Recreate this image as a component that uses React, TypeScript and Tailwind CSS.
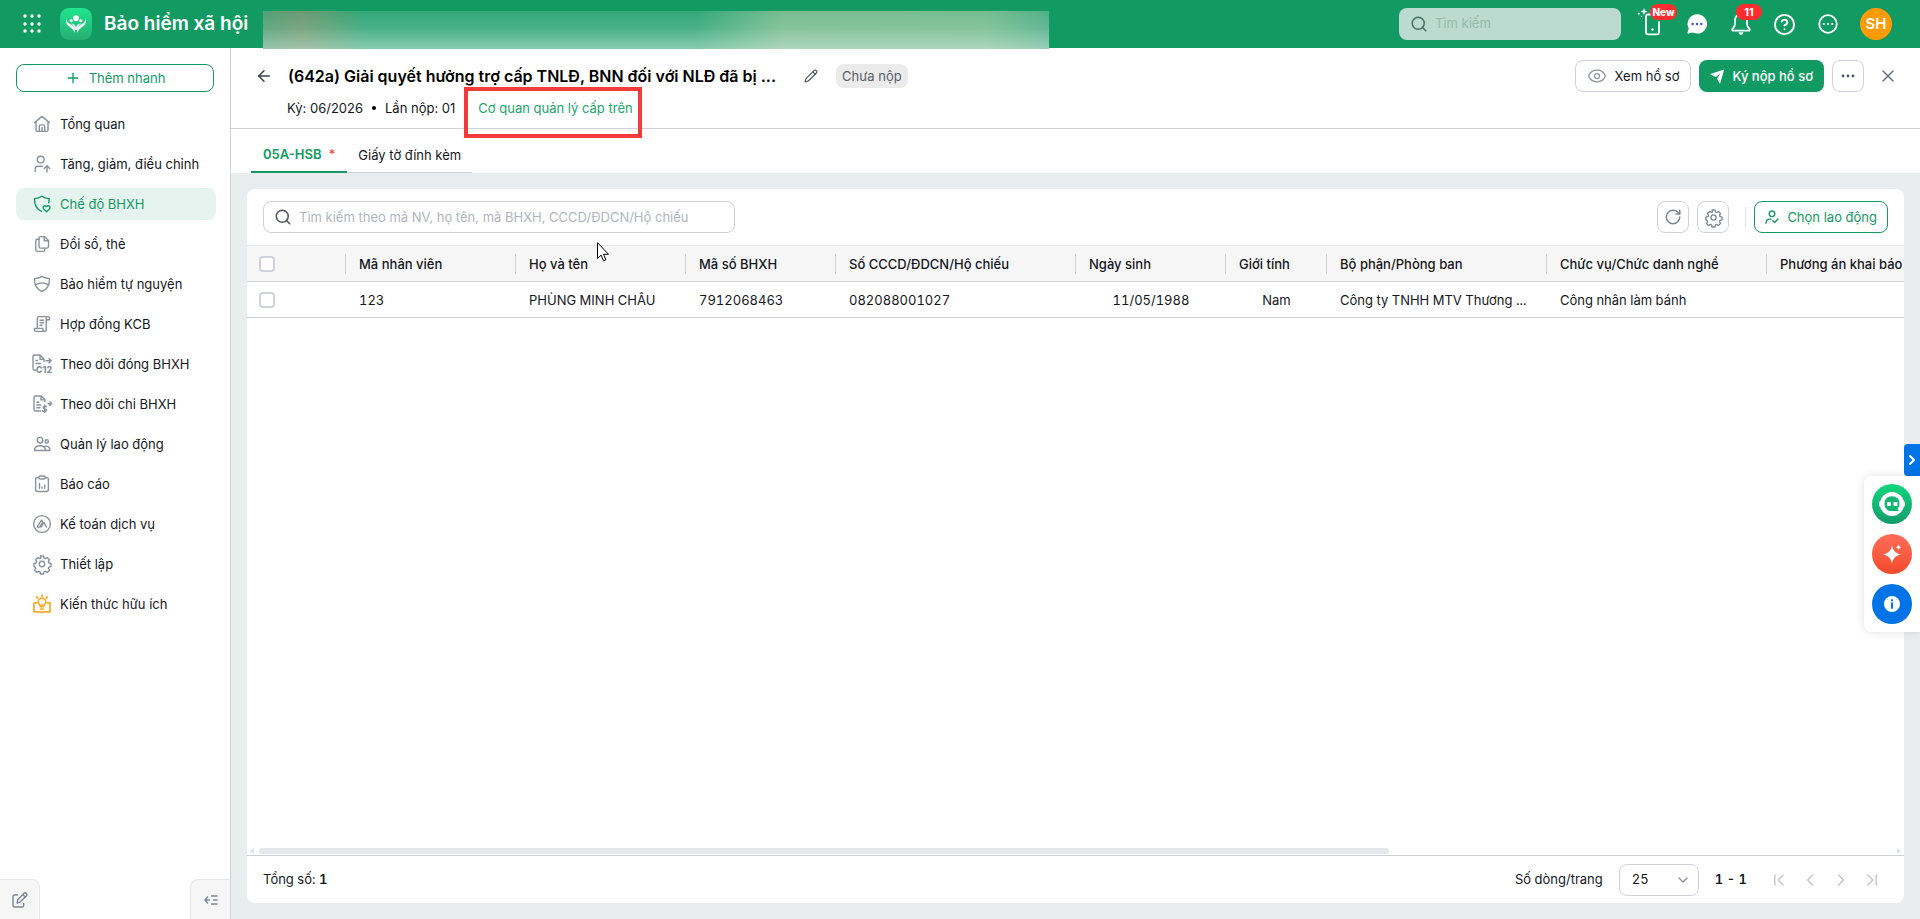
import type { ReactNode } from "react";
import {
  ArrowLeft,
  ChevronDown,
  ChevronFirst,
  ChevronLast,
  ChevronLeft,
  ChevronRight,
  CircleHelp,
  Eye,
  Pencil,
  Plus,
  RotateCw,
  Search,
  X,
} from "lucide-react";

const Icon = ({ children, size = 20, className = "" }: { children: ReactNode; size?: number; className?: string }) => (
  <svg
    width={size}
    height={size}
    viewBox="0 0 20 20"
    fill="none"
    stroke="currentColor"
    strokeWidth="1.4"
    strokeLinecap="round"
    strokeLinejoin="round"
    className={`shrink-0 overflow-visible ${className}`}
    aria-hidden="true"
  >
    {children}
  </svg>
);

const HomeIcon = () => (
  <Icon>
    <path d="M2.6 8.6 10 2.4l7.4 6.2M4 7.8v8.3c0 .8.5 1.3 1.3 1.3h9.4c.8 0 1.3-.5 1.3-1.3V7.8" />
    <path d="M7.3 17.2v-5c0-.8.5-1.3 1.3-1.3h2.8c.8 0 1.3.5 1.3 1.3v5M10 13.5v3.7" />
  </Icon>
);

const UserUpIcon = () => (
  <Icon>
    <circle cx="8.7" cy="5.6" r="3.4" />
    <path d="M3.2 17.4v-2.2c0-1.8 1.2-3 3-3h4.2M15 18v-6M12.3 14.4 15 11.7l2.7 2.7" />
  </Icon>
);

const ShieldHeartIcon = () => (
  <Icon>
    <path d="M9.3 17.2C5 15.6 2.4 11.5 2.5 4.6 5.4 4.7 7.7 3.9 9.800 2.3c2.1 1.6 4.4 2.4 7.300 2.300 0 1.600-.1 2.900-.4 4.200" />
    <path d="m14.600 17.800-2.900-2.900c-1.700-1.900.9-4.400 2.900-2.400 2-2 4.600.5 2.900 2.400z" />
  </Icon>
);

const CopyIcon = () => (
  <Icon>
    <path d="M8.500 2.600h4l4 4v6c0 .9-.6 1.500-1.500 1.500H8.500c-.9 0-1.500-.6-1.500-1.500V4.100c0-.9.6-1.500 1.500-1.500z" />
    <path d="M12.200 2.800v4h4M7 5.300H5.300c-.9 0-1.500.6-1.500 1.500v9c0 .9.600 1.600 1.500 1.600h6c.9 0 1.500-.7 1.500-1.600v-1.700" />
  </Icon>
);

const ShieldIcon = () => (
  <Icon>
    <path d="M2.500 4.600C5.500 4.600 8 3.800 10 2.400c2 1.400 4.500 2.200 7.500 2.200.2 7-2.700 11.200-7.500 12.900C5.200 15.800 2.300 11.600 2.500 4.600z" />
    <path d="M3 10.600c2 .2 3.300-1.700 7-1.700s5 1.900 7 1.700" />
  </Icon>
);

const ScrollIcon = () => (
  <Icon>
    <path d="M5.300 13.800V4.200c0-1 .6-1.600 1.600-1.600h9c1 0 1.600.7 1.600 1.500v1.700h-3.300M14.200 5.800V15.500c0 1.200-.7 1.900-1.700 1.900H4.100c-1 0-1.700-.7-1.700-1.600v-1.400h8.400v1.400c0 1 .7 1.600 1.500 1.600M14.200 5.800V4.200c0-.9.500-1.600 1.300-1.600" />
    <path d="M8 6.200h3.600M8 8.700h3.600M8 11.200h2" />
  </Icon>
);

const DocC12Icon = () => (
  <Icon>
    <path d="M3.500 16.300C2 16.300 1 15.700 1 14.500V2.600C1 1.600 1.600 1 2.500 1H8l4 4v2.500M8 1v4.200h4M4 6.500h1.600M4 9.500h4.500M14 6.800H19M17 4.700l2.200 2.100L17 8.900" />
    <text x="3.800" y="19.300" fontSize="9" fontWeight="800" fontFamily="Inter, sans-serif" fill="currentColor" stroke="none">
      C12
    </text>
  </Icon>
);

const DocMoneyIcon = () => (
  <Icon>
    <path d="M8.600 17H3.500c-.9 0-1.500-.600-1.500-1.500v-12C2 2.600 2.600 2 3.500 2h5.700l3.600 3.600v2.200M9 2.200v3.700h3.600M4.800 8.200h2M4.800 11h4M4.800 13.800h3.200M16 9.700h3.500M17.800 7.800l1.900 1.900-1.900 1.900" />
    <path d="M14.500 12.600c-.4-.7-1.200-.8-1.800-.7-2 .3-2 2.500 0 2.700 2.500.2 2.500 2.700 0 2.900-1 .1-1.800-.2-2.200-.9M12.700 11v7.500" />
  </Icon>
);

const UsersIcon = () => (
  <Icon>
    <circle cx="8" cy="6.200" r="2.800" />
    <circle cx="14.700" cy="7.500" r="1.700" />
    <path d="M2.500 16.500c0-3 1.700-4.800 5.500-4.800s5.500 1.800 5.500 4.800zM12 12.600c3-1.300 6 .2 6 3.900h-4.400" />
  </Icon>
);

const ReportIcon = () => (
  <Icon>
    <rect x="3.600" y="3.500" width="12.800" height="14" rx="2" />
    <rect x="6.800" y="2" width="6.400" height="3" rx="1.500" fill="white" />
    <path d="M7.500 9.500v4.700M10 13v1.200M12.700 11v3.200" />
  </Icon>
);

const AccountingIcon = () => (
  <Icon>
    <circle cx="10" cy="10" r="8.400" />
    <path d="m5.200 13 4.300-7 1.200 2.200-3 4.900H5.200M9.300 13l2.600-4.500 2.600 4.500" />
  </Icon>
);

const GearIcon = ({ size = 20 }: { size?: number }) => (
  <Icon size={size}>
    <circle cx="10" cy="10" r="2.700" />
    <path d="M8.500 2h3l.6 2.200 1.100.5 2-1.100 2.200 2.200-1.100 2 .5 1.100 2.200.6v3l-2.200.6-.5 1.100 1.100 2-2.200 2.200-2-1.100-1.100.5-.6 2.200h-3l-.6-2.200-1.100-.5-2 1.100-2.200-2.200 1.100-2-.5-1.100L1.900 12.500v-3l2.300-.6.5-1.100-1.100-2 2.200-2.200 2 1.100 1.100-.5z" />
  </Icon>
);

const KnowledgeIcon = () => (
  <Icon className="text-[#ffa726]">
    <path
      strokeWidth="1.700"
      d="M4.500 8.800H2v9h5.500c1 0 1.600.2 2.500.8.900-.6 1.500-.8 2.500-.8H18v-9h-2.500M10 .8v1.400M4.600 2.800l1 1M15.400 2.800l-1 1M8.500 12.600c0-1.600-2.300-2.300-2.300-4.600A3.800 3.800 0 0 1 13.800 8c0 2.300-2.300 3-2.300 4.600zM8.700 15h2.600M10 10.500V12"
    />
  </Icon>
);

const menu = [
  { label: "Tổng quan", icon: <HomeIcon /> },
  { label: "Tăng, giảm, điều chỉnh", icon: <UserUpIcon /> },
  { label: "Chế độ BHXH", icon: <ShieldHeartIcon />, active: true },
  { label: "Đổi sổ, thẻ", icon: <CopyIcon /> },
  { label: "Bảo hiểm tự nguyện", icon: <ShieldIcon /> },
  { label: "Hợp đồng KCB", icon: <ScrollIcon /> },
  { label: "Theo dõi đóng BHXH", icon: <DocC12Icon /> },
  { label: "Theo dõi chi BHXH", icon: <DocMoneyIcon /> },
  { label: "Quản lý lao động", icon: <UsersIcon /> },
  { label: "Báo cáo", icon: <ReportIcon /> },
  { label: "Kế toán dịch vụ", icon: <AccountingIcon /> },
  { label: "Thiết lập", icon: <GearIcon /> },
  { label: "Kiến thức hữu ích", icon: <KnowledgeIcon /> },
];

const columns = [
  { label: "Mã nhân viên", value: "123", width: "w-[170px]" },
  { label: "Họ và tên", value: "PHÙNG MINH CHÂU", width: "w-[170px]" },
  { label: "Mã số BHXH", value: "7912068463", width: "w-[150px]" },
  { label: "Số CCCD/ĐDCN/Hộ chiếu", value: "082088001027", width: "w-[240px]" },
  { label: "Ngày sinh", value: "11/05/1988", width: "w-[150px]", center: true },
  { label: "Giới tính", value: "Nam", width: "w-[101px]", center: true },
  { label: "Bộ phận/Phòng ban", value: "Công ty TNHH MTV Thương ...", width: "w-[220px]" },
  { label: "Chức vụ/Chức danh nghề", value: "Công nhân làm bánh", width: "w-[220px]" },
  { label: "Phương án khai báo", value: "", width: "w-[320px]" },
];

const TopBar = () => (
  <header className="relative flex h-12 shrink-0 items-center bg-[#119b62] pl-[22px] pr-7 text-white">
    <button aria-label="Ứng dụng" className="mr-[18px]">
      <svg width="20" height="20" viewBox="0 0 20 20" fill="currentColor">
        {[2, 10, 17].map((y) => [3, 10, 17].map((x) => <circle key={`${x}-${y}`} cx={x} cy={y} r="1.7" />))}
      </svg>
    </button>
    <svg width="32" height="32" viewBox="0 0 32 32" className="mr-3 shrink-0" aria-hidden="true">
      <defs>
        <linearGradient id="logo" x1="0" y1="0" x2="0" y2="1">
          <stop offset="0" stopColor="#1fe58f" />
          <stop offset="1" stopColor="#27ae74" />
        </linearGradient>
      </defs>
      <rect width="32" height="32" rx="9" fill="url(#logo)" />
      <circle cx="16" cy="10.200" r="2.900" fill="#fff" />
      <circle cx="11.200" cy="12.800" r="1.500" fill="#fff" />
      <circle cx="20.800" cy="12.800" r="1.500" fill="#fff" />
      <path fill="#fff" d="M6.300 10.500c.4 4 3 5 5.500 6.600 2.500 1.600 3.700 4 3 7.700-1.400-3.400-3-4.500-5-5.800-2.500-1.700-4.400-4.200-3.500-8.500zM25.700 10.500c-.4 4-3 5-5.500 6.600-2.500 1.600-3.700 4-3 7.700 1.400-3.400 3-4.500 5-5.800 2.500-1.700 4.400-4.200 3.500-8.500z" />
      <path fill="#fff" d="M11.300 15.600c2.500.4 4.200 1.600 4.700 3.900.5-2.300 2.200-3.500 4.700-3.900-2 1.800-3.300 3.500-3.700 6.400h-2c-.4-2.900-1.700-4.600-3.700-6.400z" />
    </svg>
    <span className="text-[19px] font-semibold">Bảo hiểm xã hội</span>

    {/* blurred company name */}
    <div className="absolute left-[263px] top-[11px] z-10 h-[38px] w-[786px] overflow-hidden bg-[#32a878]">
      <div className="absolute inset-0 bg-[linear-gradient(to_right,#4fa077_0%,#6c9a72_5%,#32a878_13%,#32a878_55%,#78bd91_66%,#76bd91_92%,#4fb087_100%)]" />
      <div className="absolute inset-0 bg-[linear-gradient(to_bottom,rgba(255,255,255,0)_0%,rgba(240,246,240,0.120)_45%,rgba(240,246,240,0.450)_100%)]" />
    </div>

    <div className="ml-auto flex items-center">
      <label className="mr-4 flex h-8 w-[222px] items-center gap-[7px] rounded-lg bg-[#bddad0] px-[11px]">
        <Search size={18} strokeWidth={2} className="shrink-0 text-[#44705f]" />
        <input
          aria-label="Tìm kiếm"
          placeholder="Tìm kiếm"
          className="w-full min-w-0 bg-transparent text-[13px] outline-none placeholder:text-[#92bbab]"
        />
      </label>
      <button aria-label="Ứng dụng di động" className="relative mr-6 h-8 w-[26px]">
        <svg width="26" height="32" viewBox="0 0 26 32" fill="none" stroke="currentColor" strokeWidth="1.800">
          <path d="M22 14v10.300c0 1.200-.7 2-2 2h-9c-1.300 0-2-.8-2-2V8.500c0-1.300.7-2 2-2H15" strokeLinecap="round" />
          <circle cx="15.500" cy="21.500" r="1.200" fill="currentColor" stroke="none" />
          <path d="m7 0 1 2.400 2.400 1L8 4.400 7 7 6 4.400l-2.400-1L6 2.400zM1.800 4.200l.5 1.100 1.200.5-1.200.5-.5 1.200-.5-1.200L.1 5.800l1.200-.5zM4.500 7.600l.8.9-.8.8-.8-.8z" fill="currentColor" stroke="none" />
        </svg>
        <span className="absolute -top-1 left-[13px] flex h-4 w-[27px] items-center justify-center rounded-full bg-[#ff2d2d] text-[10px] font-extrabold">
          New
        </span>
      </button>
      <button aria-label="Tin nhắn" className="mr-6">
        <svg width="20" height="20" viewBox="0 0 20 20">
          <path fill="#fff" d="M10.300.3A9.600 9.600 0 1 1 6 18.400L1.400 19.600c-.7.100-1.100-.4-.9-1l1.300-4A9.600 9.600 0 0 1 10.300.3z" />
          <g fill="#3d4fe0">
            <circle cx="5.700" cy="10" r="1.200" />
            <circle cx="10" cy="10" r="1.200" />
            <circle cx="14.300" cy="10" r="1.200" />
          </g>
        </svg>
      </button>
      <button aria-label="Thông báo" className="relative mr-6">
        <svg width="20" height="20" viewBox="0 0 20 20" fill="none" stroke="currentColor" strokeWidth="1.800" className="overflow-visible">
          <path strokeLinejoin="round" d="M10 .5C6.300.500 4 3 4 6.500v3.500c0 2-.8 3-2.300 4.600-.9 1-.4 2.100.9 2.100h14.800c1.300 0 1.800-1.100.9-2.100C16.800 13 16 12 16 10V6.500C16 3 13.700.5 10 .5z" />
          <path d="M7.500 18.200c.4 1.700 1.300 2.600 2.500 2.600s2.100-.9 2.500-2.600z" fill="currentColor" stroke="none" />
        </svg>
        <span className="absolute -top-[10px] left-[5px] flex h-4 w-[26px] items-center justify-center rounded-full bg-[#ff2d2d] text-[11px] font-bold">
          11
        </span>
      </button>
      <button aria-label="Trợ giúp" className="mr-[22px] -ml-0.5">
        <CircleHelp size={23} strokeWidth={2} />
      </button>
      <button aria-label="Thêm" className="mr-[22px]">
        <svg width="20" height="20" viewBox="0 0 20 20" fill="none" stroke="currentColor" strokeWidth="1.800">
          <circle cx="10" cy="10" r="8.800" />
          <path d="M5.700 10h.1M10 10h.1M14.200 10h.1" strokeWidth="2.200" strokeLinecap="round" />
        </svg>
      </button>
      <button className="size-8 rounded-full bg-[#ff9b04] text-[15px] font-semibold">SH</button>
    </div>
  </header>
);

const Sidebar = () => (
  <aside className="flex w-[231px] shrink-0 flex-col border-r border-[#cfd2d8] bg-white">
    <button className="mx-4 mt-4 flex h-7 w-[198px] items-center justify-center gap-2 rounded-lg border border-[#119b62] text-[13px] text-[#119b62]">
      <Plus size={16} strokeWidth={2} />
      <span className="pt-0.5">Thêm nhanh</span>
    </button>
    <nav className="mx-4 mt-4 flex w-[200px] flex-col gap-2 text-[13px]">
      {menu.map((item) => (
        <a
          key={item.label}
          href="#"
          className={`flex h-8 items-center gap-2 rounded-lg pl-4 ${item.active ? "bg-[#e6f4ef] text-[#119b62]" : "text-[#15171c]"}`}
        >
          <span className={item.active ? "" : "text-[#8b919d]"}>{item.icon}</span>
          <span className="pt-0.5">{item.label}</span>
        </a>
      ))}
    </nav>
    <div className="mt-auto flex justify-between">
      <button aria-label="Góp ý" className="flex size-10 items-center justify-center rounded-tr-lg border-r border-t border-[#e5e7ea] bg-[#f6f6f6] text-[#7f8593]">
        <Icon size={18}>
          <path strokeWidth="1.600" d="M7 4.500H4c-1.200 0-1.800.7-1.800 1.800V16c0 1.200.7 1.800 1.800 1.800h8.300c1.200 0 1.800-.7 1.800-1.800v-2.200M6.800 13.300l.7-3.700 7-7c1.800-1.500 4.200 1 2.700 2.700l-7 7zM13 4l3 3" />
        </Icon>
      </button>
      <button aria-label="Thu gọn" className="flex size-10 items-center justify-center rounded-tl-lg border-l border-t border-[#e5e7ea] bg-[#f6f6f6] text-[#7f8593]">
        <svg width="14" height="10" viewBox="0 0 14 10" fill="none" stroke="currentColor" strokeWidth="1.300">
          <path d="M4 1.500.9 5 4 8.500M1 5h5M7 1h6.500M9 5h4.500M7 9h6.500" />
        </svg>
      </button>
    </div>
  </aside>
);

const RecordHeader = () => (
  <section className="flex h-[81px] shrink-0 items-start justify-between border-b border-[#cfd2d8] bg-white pl-6 pr-[22px] pt-3">
    <div>
      <div className="flex h-8 items-center">
        <button aria-label="Quay lại" className="mr-[15px] text-[#3d4048]">
          <ArrowLeft size={18} strokeWidth={2} />
        </button>
        <h1 className="w-[492px] truncate text-[16px] font-semibold text-black">
          (642a) Giải quyết hưởng trợ cấp TNLĐ, BNN đối với NLĐ đã bị ...
        </h1>
        <button aria-label="Sửa" className="ml-6 mr-[18px] text-[#50545e]">
          <Pencil size={14} strokeWidth={2} />
        </button>
        <span className="flex h-6 items-center rounded-lg bg-[#ebebeb] px-1.5 pt-0.5 text-[13px] text-[#5b5e64]">Chưa nộp</span>
      </div>
      <div className="flex items-center pl-[32px] text-[13px] leading-8 text-[#15171c]">
        <span>Kỳ: 06/2026</span>
        <span className="mx-[9px] size-1 rounded-full bg-black" />
        <span>Lần nộp: 01</span>
        <div className="relative ml-[23px]">
          <a href="#" className="text-[#23a46c]">Cơ quan quản lý cấp trên</a>
          <div className="pointer-events-none absolute -left-[14px] -top-[5px] z-10 h-[51px] w-[178px] border-4 border-[#f43b3b]" />
        </div>
      </div>
    </div>
    <div className="flex items-center gap-2 text-[13px] text-[#15171c]">
      <button className="flex h-8 items-center gap-2 rounded-lg border border-[#cfd2d8] px-[11px]">
        <Eye size={20} strokeWidth={1.500} className="text-[#8b919d]" />
        <span className="pt-0.5">Xem hồ sơ</span>
      </button>
      <button className="flex h-8 items-center gap-[7px] rounded-lg bg-[#119b62] px-[11px] font-medium text-white">
        <svg width="15" height="15" viewBox="0 0 15 15" fill="currentColor">
          <path d="M14.200.6 10.300 14c-.2.600-.8.700-1.100.100L7 9.400 10.400 4.600 5.600 8 .9 5.800C.2 5.500.3 4.900 1 4.700z" />
        </svg>
        <span className="pt-0.5">Ký nộp hồ sơ</span>
      </button>
      <button aria-label="Tùy chọn" className="flex size-8 items-center justify-center rounded-lg border border-[#cfd2d8]">
        <svg width="14" height="4" viewBox="0 0 14 4" fill="#50545e">
          <circle cx="2" cy="2" r="1.400" />
          <circle cx="7" cy="2" r="1.400" />
          <circle cx="12" cy="2" r="1.400" />
        </svg>
      </button>
      <button aria-label="Đóng" className="ml-[6px] text-[#666b76]">
        <X size={20} strokeWidth={1.700} />
      </button>
    </div>
  </section>
);

const Tabs = () => (
  <div role="tablist" className="flex h-11 shrink-0 items-stretch bg-white pl-5 text-[13px]">
    <button role="tab" aria-selected="true" className="border-b-2 border-[#119b62] px-3 pt-3.5 pb-1 font-semibold text-[#119b62]">
      05A-HSB <span className="ml-1 font-normal text-[#f43b3b]">*</span>
    </button>
    <button role="tab" aria-selected="false" className="border-b border-[#cfd2d8] px-[11px] pt-3.5 pb-1 text-[#15171c]">
      Giấy tờ đính kèm
    </button>
  </div>
);

const iconBtn = "flex size-8 items-center justify-center rounded-lg border border-[#cfd2d8] text-[#7f8593]";
const checkbox = "block size-4 appearance-none rounded-[4px] border-2 border-[#cfd2d8] bg-white";

const Toolbar = () => (
  <div className="flex h-14 shrink-0 items-center px-4">
    <label className="flex h-8 w-[472px] items-center gap-[7px] rounded-lg border border-[#cfd2d8] px-2.5">
      <Search size={18} strokeWidth={2} className="shrink-0 text-[#50545e]" />
      <input
        aria-label="Tìm kiếm nhân viên"
        placeholder="Tìm kiếm theo mã NV, họ tên, mã BHXH, CCCD/ĐDCN/Hộ chiếu"
        className="w-full min-w-0 pt-0.5 text-[13px] outline-none placeholder:text-[#b1b5bd]"
      />
    </label>
    <div className="ml-auto flex items-center gap-2">
      <button aria-label="Tải lại" className={iconBtn}>
        <RotateCw size={18} strokeWidth={2} />
      </button>
      <button aria-label="Thiết lập cột" className={iconBtn}>
        <GearIcon size={19} />
      </button>
      <span className="ml-2 h-5 w-px bg-[#e0e2e6]" />
      <button className="flex h-8 items-center gap-2 rounded-lg border border-[#119b62] px-[10px] text-[13px] text-[#119b62]">
        <Icon size={14}>
          <circle cx="10" cy="5.500" r="4" strokeWidth="2" />
          <path strokeWidth="2" d="M1.500 19c0-3.500 1.500-6 5-6h2M11 15.500l2.800 2.500 4.700-5" />
        </Icon>
        <span className="pt-0.5">Chọn lao động</span>
      </button>
    </div>
  </div>
);

const EmployeeTable = () => (
  <div className="min-h-0 flex-1 overflow-hidden">
    <table className="w-[1840px] table-fixed border-collapse text-left text-[13px] text-[#15171c] tabular-nums">
      <thead>
        <tr className="h-9 border-y border-[#cfd2d8] border-t-[#e6e7ea] bg-[#f6f6f6]">
          <th className="w-[99px] p-0">
            <div className="flex h-5 items-center border-r border-[#cfd2d8] pl-3">
              <input type="checkbox" aria-label="Chọn tất cả" className={checkbox} />
            </div>
          </th>
          {columns.map((col) => (
            <th key={col.label} className={`p-0 font-medium ${col.width}`}>
              <div className="h-5 border-r border-[#cfd2d8] pl-[13px] leading-5">{col.label}</div>
            </th>
          ))}
        </tr>
      </thead>
      <tbody>
        <tr className="h-9 border-b border-[#cfd2d8]">
          <td className="p-0 pl-3">
            <input type="checkbox" aria-label="Chọn dòng" className={checkbox} />
          </td>
          {columns.map((col) => (
            <td key={col.label} className={`truncate px-[13px] pt-0.5 pb-0 ${col.center ? "text-center" : ""}`}>
              {col.value}
            </td>
          ))}
        </tr>
      </tbody>
    </table>
  </div>
);

const TableFooter = () => (
  <>
    <div className="flex h-2 shrink-0 items-center justify-between px-[3px]">
      <svg width="4" height="6" viewBox="0 0 4 6" fill="#dddfe3"><path d="M4 0v6L0 3z" /></svg>
      <div className="mx-[5px] h-[6px] flex-1">
        <div className="h-[6px] w-[calc(69%+3px)] rounded-full bg-[#e6e7ea]" />
      </div>
      <svg width="4" height="6" viewBox="0 0 4 6" fill="#dddfe3"><path d="M0 0v6l4-3z" /></svg>
    </div>
    <div className="flex h-12 shrink-0 items-center border-t border-[#cfd2d8] px-4 text-[13px] text-[#15171c] tabular-nums">
      <span>Tổng số: <b className="font-semibold">1</b></span>
      <label htmlFor="page-size" className="ml-auto mr-4">Số dòng/trang</label>
      <div className="relative mr-4">
        <select id="page-size" className="h-8 w-20 appearance-none rounded-lg border border-[#cfd2d8] pl-3">
          <option>25</option>
        </select>
        <ChevronDown size={16} strokeWidth={2} className="pointer-events-none absolute right-2 top-2 text-[#8b919d]" />
      </div>
      <span className="mr-[22px] font-semibold">1 - 1</span>
      <div className="flex gap-[11px] pr-1.5 text-[#c3c6cd]">
        <button aria-label="Trang đầu"><ChevronFirst size={20} strokeWidth={1.700} /></button>
        <button aria-label="Trang trước"><ChevronLeft size={20} strokeWidth={1.700} /></button>
        <button aria-label="Trang sau"><ChevronRight size={20} strokeWidth={1.700} /></button>
        <button aria-label="Trang cuối"><ChevronLast size={20} strokeWidth={1.700} /></button>
      </div>
    </div>
  </>
);

const FloatingTools = () => (
  <div className="fixed right-0 top-[444px] z-20 flex flex-col items-end">
    <button aria-label="Mở rộng" className="flex h-8 w-4 items-center justify-center rounded-l-sm bg-[#0073e6] text-white">
      <ChevronRight size={16} strokeWidth={3} className="shrink-0" />
    </button>
    <div className="flex w-14 flex-col items-center gap-[10px] rounded-l-lg bg-white py-2 shadow-[0_0_10px_rgba(0,0,0,0.120)]">
      <button aria-label="Trợ lý" className="flex size-10 items-center justify-center rounded-full bg-linear-to-b from-[#14d67e] to-[#129c6b]">
        <svg width="28" height="26" viewBox="0 0 28 26">
          <circle cx="14" cy="13" r="12" fill="#fff" />
          <rect x="1" y="9" width="26" height="8" rx="4" fill="#fff" />
          <path fill="#12b572" d="M14 5.300c4.500 0 7.500 3 7.500 7.200 0 2-.6 3.700-1.900 5 .1.900.5 1.700 1.300 2.600H13c-4 0-6.500-3.400-6.500-7.600s3-7.200 7.500-7.200z" />
          <rect x="9" y="11" width="4" height="4" rx="1" fill="#fff" />
          <rect x="15.500" y="11" width="4" height="4" rx="1" fill="#fff" />
        </svg>
      </button>
      <button aria-label="AI" className="flex size-10 items-center justify-center rounded-full bg-linear-to-b from-[#ff6d58] to-[#f4492b]">
        <svg width="20" height="20" viewBox="0 0 20 20" fill="#fff">
          <path d="M10 1.500c1.200 5.500 3.300 7.500 9 9-5.700 1.500-7.800 3.500-9 9-1.200-5.500-3.300-7.500-9-9 5.700-1.500 7.800-3.500 9-9z" />
          <path d="M16.500.3c.4 1.900 1.100 2.600 3 3-1.900.4-2.600 1.100-3 3-.4-1.900-1.100-2.600-3-3 1.900-.4 2.600-1.100 3-3z" />
        </svg>
      </button>
      <button aria-label="Thông tin" className="flex size-10 items-center justify-center rounded-full bg-[#0073e6]">
        <svg width="16" height="16" viewBox="0 0 16 16">
          <circle cx="8" cy="8" r="8" fill="#fff" />
          <path fill="#0073e6" d="M7 3.200h2v2H7zM7 6.500h2v6.300H7z" />
        </svg>
      </button>
    </div>
  </div>
);

const App = () => (
  <div className="flex h-screen flex-col overflow-hidden bg-white font-[Inter,'Noto_Sans',sans-serif]">
    <TopBar />
    <div className="flex min-h-0 flex-1">
      <Sidebar />
      <main className="flex min-w-0 flex-1 flex-col bg-[#ebecee]">
        <RecordHeader />
        <Tabs />
        <div className="m-4 flex min-h-0 flex-1 flex-col overflow-hidden rounded-lg bg-white">
          <Toolbar />
          <EmployeeTable />
          <TableFooter />
        </div>
      </main>
    </div>
    <FloatingTools />
    {/* mouse pointer */}
    <svg width="12" height="20" viewBox="0 0 12 20" className="pointer-events-none absolute left-[597px] top-[242px] z-30">
      <path d="M.5.700v15.800l3.600-3.400 2.400 5.700 2.400-1-2.400-5.500h5z" fill="#fff" stroke="#000" />
    </svg>
  </div>
);

export default App;
